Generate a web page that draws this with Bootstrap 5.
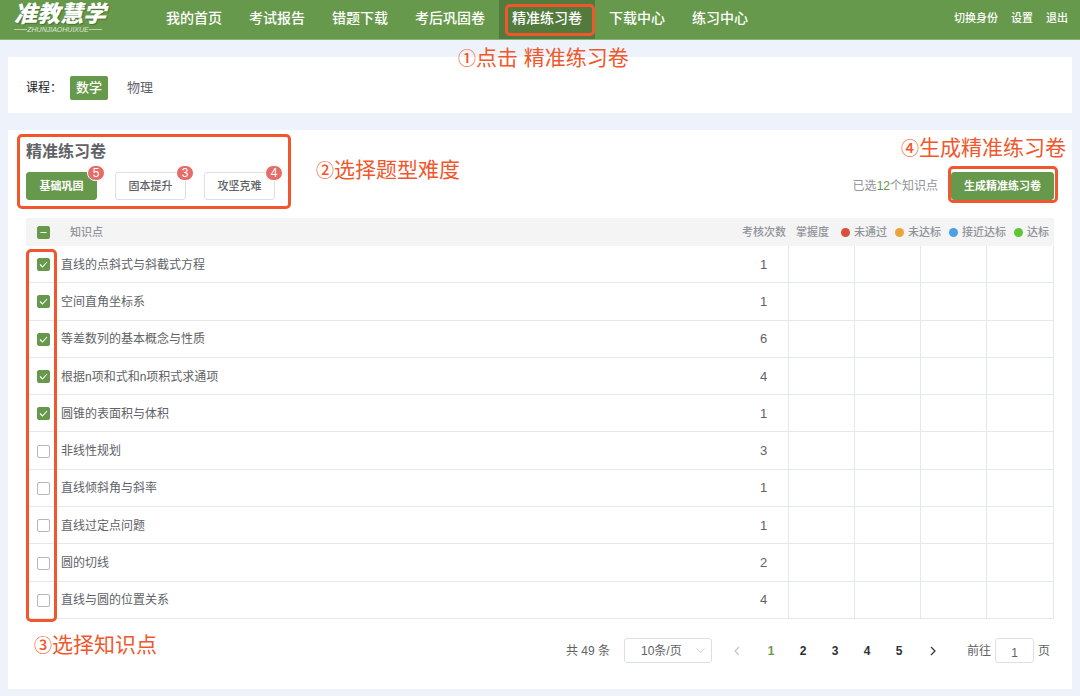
<!DOCTYPE html>
<html lang="zh-CN">
<head>
<meta charset="utf-8">
<meta name="viewport" content="width=device-width, initial-scale=1">
<title>精准练习卷</title>
<link rel="stylesheet" href="https://cdn.jsdelivr.net/npm/bootstrap@5.3.0/dist/css/bootstrap.min.css">
<style>
  :root { --brand: #67994c; --brand-dark: #527a3d; --note: #f1572c; --ink: #606266; --soft: #909399; --rule: #e4e7ed; }
  body { background: #eef3fb; color: var(--ink); font: 12px/18px "Liberation Sans", "Noto Sans CJK SC", sans-serif; }
  a { color: inherit; text-decoration: none; }
  .topbar { background: var(--brand); height: 40px; color: #fff; border-bottom: 1px solid #8db278; }
  .logo { width: 153px; padding: 2px 0 0 14px; color: #fff; }
  .logo-name { font-size: 23px; line-height: 24px; font-weight: 900; font-style: italic; text-shadow: 1px 1px 1px #46702f; }
  .logo-sub { width: 88px; font-size: 7px; line-height: 7px; font-style: italic; color: #dfead8; }
  .logo-sub::before, .logo-sub::after { content: ""; flex: 1; height: 1px; background: #b9d0ab; }
  .main-nav { gap: 1px; font-size: 14px; font-weight: 500; }
  .main-nav a { padding: 0 13px 4px; color: #fff; }
  .main-nav .active { background: var(--brand-dark); }
  .user-nav { gap: 13px; font-size: 11px; padding: 0 12px 4px; font-weight: 500; }
  .note { color: var(--note); font-size: 21px; line-height: 24px; font-weight: 400; white-space: nowrap; }
  .note span { font-size: 18px; font-weight: 500; }
  .frame { position: absolute; border: 3px solid var(--note); border-radius: 5px; pointer-events: none; }
  .frame-nav { inset: 4px 0 3px 6px; }
  .note-nav { position: absolute; top: 46px; left: -41px; z-index: 2; }
  .frame-levels { inset: -8px -16px -9px -9px; }
  .note-levels { position: absolute; top: 16px; left: 290px; }
  .frame-make { inset: -6px -4px -3px -3px; }
  .note-make { position: absolute; right: -12px; top: -36px; }
  .frame-checks { top: 31px; left: 0; width: 31px; bottom: -3px; }
  .panel { background: #fff; margin: 17px 8px 0; padding: 0 18px; }
  .subjects { padding-top: 19px; padding-bottom: 13px; }
  .subject { border: 0; border-radius: 2px; background: none; color: var(--ink); font-size: 13px; line-height: 24px; padding: 0 6px; }
  .subject.on { background: var(--brand); color: #fff; font-weight: 500; margin-right: 13px; }
  .practice { padding-top: 12px; padding-bottom: 26px; margin-bottom: 7px; }
  h1 { font-size: 16px; line-height: 20px; font-weight: 600; margin: 0 0 10px; }
  .levels { gap: 18px; }
  .act { height: 28px; min-width: 71px; border: 1px solid #dcdfe6; border-radius: 3px; padding: 0 8px; background: #fff; color: var(--ink); font-size: 11px; line-height: 16px; font-weight: 500; }
  .act.on { background: var(--brand); border-color: var(--brand); color: #fff; font-weight: 700; }
  .act.make { padding: 0 12px; }
  .tally { position: absolute; top: -8px; right: -9px; min-width: 18px; border: 1px solid #fff; border-radius: 8px; background: #e56c69; color: #fff; font-size: 12px; line-height: 14px; font-weight: 400; }
  .chosen { color: var(--soft); margin-right: 13px; }
  .chosen b { color: var(--brand); font-weight: 400; }
  .points-wrap { margin-top: 18px; }
  .points { height: 401px; margin: 0; table-layout: fixed; border-collapse: separate; border-spacing: 0; width: 100%; }
  .points th { height: 28px; background: #f4f4f5; color: var(--soft); font-size: 11px; line-height: 16px; font-weight: 500; padding: 0; }
  .points th.topic { padding-left: 9px; }
  .points td { height: 37px; border-bottom: 1px solid var(--rule); padding: 1px 0 0; }
  .points .times { text-align: center; }
  .points td.times { font-size: 13px; }
  .points td.times, .points .level { border-right: 1px solid var(--rule); }
  .legend-row { gap: 8px; padding-left: 7px; white-space: nowrap; }
  .dot { width: 9px; height: 9px; border-radius: 50%; margin-right: 4px; flex: none; }
  .form-check-input { width: 13px; height: 13px; margin: 0 auto; display: block; border: 1px solid #b4b7bd; border-radius: 2px !important; }
  .form-check-input[type=checkbox]:checked, .form-check-input[type=checkbox]:indeterminate { background-color: var(--brand); border-color: var(--brand); background-size: 13px 13px; }
  .form-check-input[type=checkbox]:checked { background-image: url("data:image/svg+xml,%3Csvg xmlns='http://www.w3.org/2000/svg' viewBox='0 0 13 13'%3E%3Cpath d='M3 6.5l2.5 2.5 4.5-5' fill='none' stroke='%23fff' stroke-width='1.1'/%3E%3C/svg%3E"); }
  .form-check-input[type=checkbox]:indeterminate { background-image: url("data:image/svg+xml,%3Csvg xmlns='http://www.w3.org/2000/svg' viewBox='0 0 13 13'%3E%3Cpath d='M3.5 6.5h6' stroke='%23fff' stroke-width='1.1'/%3E%3C/svg%3E"); }
  .foot { margin-top: 14px; padding: 0 4px 0 8px; }
  .pager { margin-top: 5px; }
  .per-page { width: 88px; height: 25px; margin: 0 7px 0 14px; padding: 0 0 0 16px; border: 1px solid #dcdfe6; border-radius: 3px; color: var(--ink); font-size: 12px; appearance: none; background: #fff url("data:image/svg+xml,%3Csvg xmlns='http://www.w3.org/2000/svg' viewBox='0 0 10 10'%3E%3Cpath d='M1 3l4 4 4-4' fill='none' stroke='%23c0c4cc'/%3E%3C/svg%3E") no-repeat right 6px center / 9px 9px; }
  .pg { width: 32px; height: 25px; border: 0; padding: 0; background: none; color: #303133; font-size: 12px; font-weight: 700; }
  .pg.on { color: var(--brand); }
  .pg.arrow { width: 36px; }
  .goto { width: 39px; height: 25px; border: 1px solid #dcdfe6; border-radius: 3px; color: var(--ink); text-align: center; font-size: 12px; padding: 4px 0 0; margin: 0 4px; }
</style>
</head>
<body>
<header class="topbar d-flex">
  <a href="#" class="logo flex-shrink-0">
    <div class="logo-name">准教慧学</div>
    <div class="logo-sub d-flex align-items-center">ZHUNJIAOHUIXUE</div>
  </a>
  <nav class="main-nav d-flex flex-grow-1 text-nowrap">
    <a href="#" class="d-flex align-items-center">我的首页</a>
    <a href="#" class="d-flex align-items-center">考试报告</a>
    <a href="#" class="d-flex align-items-center">错题下载</a>
    <a href="#" class="d-flex align-items-center">考后巩固卷</a>
    <div class="d-flex position-relative">
      <a href="#" class="active d-flex align-items-center" aria-current="page">精准练习卷</a>
      <div class="frame frame-nav"></div>
      <div class="note note-nav"><span>①</span>点击 精准练习卷</div>
    </div>
    <a href="#" class="d-flex align-items-center">下载中心</a>
    <a href="#" class="d-flex align-items-center">练习中心</a>
  </nav>
  <nav class="user-nav d-flex align-items-center text-nowrap">
    <a href="#">切换身份</a><a href="#">设置</a><a href="#">退出</a>
  </nav>
</header>

<section class="panel subjects d-flex align-items-center">
  <span class="me-2 text-dark">课程：</span>
  <button type="button" class="subject on">数学</button>
  <button type="button" class="subject">物理</button>
</section>

<main class="panel practice">
  <div class="d-flex justify-content-between align-items-end">
    <div class="position-relative">
      <h1>精准练习卷</h1>
      <div class="levels d-flex">
        <button type="button" class="act on position-relative">基础巩固<span class="tally">5</span></button>
        <button type="button" class="act position-relative">固本提升<span class="tally">3</span></button>
        <button type="button" class="act position-relative">攻坚克难<span class="tally">4</span></button>
      </div>
      <div class="frame frame-levels"></div>
      <div class="note note-levels"><span>②</span>选择题型难度</div>
    </div>
    <div class="d-flex align-items-center">
      <span class="chosen">已选<b>12</b>个知识点</span>
      <div class="position-relative">
        <button type="button" class="act on make d-block">生成精准练习卷</button>
        <div class="frame frame-make"></div>
        <div class="note note-make"><span>④</span>生成精准练习卷</div>
      </div>
    </div>
  </div>

  <div class="points-wrap position-relative">
    <table class="points align-middle">
      <colgroup><col style="width:35px"><col><col style="width:50px"><col style="width:66px"><col style="width:66px"><col style="width:66px"><col style="width:67px"></colgroup>
      <thead>
        <tr>
          <th><input class="form-check-input" type="checkbox" id="all" aria-label="全选"></th>
          <th class="topic">知识点</th>
          <th class="times">考核次数</th>
          <th colspan="4">
            <div class="legend-row d-flex align-items-center">
              <span>掌握度</span>
              <span class="d-flex align-items-center ms-1"><i class="dot" style="background:#dc4e3c"></i>未通过</span>
              <span class="d-flex align-items-center"><i class="dot" style="background:#eda33b"></i>未达标</span>
              <span class="d-flex align-items-center"><i class="dot" style="background:#4aa0e8"></i>接近达标</span>
              <span class="d-flex align-items-center"><i class="dot" style="background:#5cc637"></i>达标</span>
            </div>
          </th>
        </tr>
      </thead>
      <tbody>
        <tr><td><input class="form-check-input" type="checkbox" id="k1" checked></td><td><label for="k1">直线的点斜式与斜截式方程</label></td><td class="times">1</td><td class="level"></td><td class="level"></td><td class="level"></td><td class="level"></td></tr>
        <tr><td><input class="form-check-input" type="checkbox" id="k2" checked></td><td><label for="k2">空间直角坐标系</label></td><td class="times">1</td><td class="level"></td><td class="level"></td><td class="level"></td><td class="level"></td></tr>
        <tr><td><input class="form-check-input" type="checkbox" id="k3" checked></td><td><label for="k3">等差数列的基本概念与性质</label></td><td class="times">6</td><td class="level"></td><td class="level"></td><td class="level"></td><td class="level"></td></tr>
        <tr><td><input class="form-check-input" type="checkbox" id="k4" checked></td><td><label for="k4">根据n项和式和n项积式求通项</label></td><td class="times">4</td><td class="level"></td><td class="level"></td><td class="level"></td><td class="level"></td></tr>
        <tr><td><input class="form-check-input" type="checkbox" id="k5" checked></td><td><label for="k5">圆锥的表面积与体积</label></td><td class="times">1</td><td class="level"></td><td class="level"></td><td class="level"></td><td class="level"></td></tr>
        <tr><td><input class="form-check-input" type="checkbox" id="k6"></td><td><label for="k6">非线性规划</label></td><td class="times">3</td><td class="level"></td><td class="level"></td><td class="level"></td><td class="level"></td></tr>
        <tr><td><input class="form-check-input" type="checkbox" id="k7"></td><td><label for="k7">直线倾斜角与斜率</label></td><td class="times">1</td><td class="level"></td><td class="level"></td><td class="level"></td><td class="level"></td></tr>
        <tr><td><input class="form-check-input" type="checkbox" id="k8"></td><td><label for="k8">直线过定点问题</label></td><td class="times">1</td><td class="level"></td><td class="level"></td><td class="level"></td><td class="level"></td></tr>
        <tr><td><input class="form-check-input" type="checkbox" id="k9"></td><td><label for="k9">圆的切线</label></td><td class="times">2</td><td class="level"></td><td class="level"></td><td class="level"></td><td class="level"></td></tr>
        <tr><td><input class="form-check-input" type="checkbox" id="k10"></td><td><label for="k10">直线与圆的位置关系</label></td><td class="times">4</td><td class="level"></td><td class="level"></td><td class="level"></td><td class="level"></td></tr>
      </tbody>
    </table>
    <div class="frame frame-checks"></div>
  </div>

  <div class="foot d-flex justify-content-between align-items-start">
    <div class="note"><span>③</span>选择知识点</div>
    <div class="pager d-flex align-items-center text-nowrap">
      <span>共 49 条</span>
      <select class="per-page" aria-label="每页条数"><option>10条/页</option><option>20条/页</option></select>
      <button type="button" class="pg arrow" aria-label="上一页"><svg width="10" height="10" viewBox="0 0 10 10" fill="none" stroke="#c0c4cc" stroke-width="1.2"><path d="M7 1L3 5l4 4"/></svg></button>
      <button type="button" class="pg on">1</button>
      <button type="button" class="pg">2</button>
      <button type="button" class="pg">3</button>
      <button type="button" class="pg">4</button>
      <button type="button" class="pg">5</button>
      <button type="button" class="pg arrow" aria-label="下一页"><svg width="10" height="10" viewBox="0 0 10 10" fill="none" stroke="#303133" stroke-width="1.2"><path d="M3 1l4 4-4 4"/></svg></button>
      <label for="goto" class="ms-3">前往</label>
      <input id="goto" class="goto" type="text" value="1">
      <span>页</span>
    </div>
  </div>
</main>
<script src="https://cdn.jsdelivr.net/npm/bootstrap@5.3.0/dist/js/bootstrap.bundle.min.js"></script>
<script>document.getElementById('all').indeterminate = true;</script>
</body>
</html>
